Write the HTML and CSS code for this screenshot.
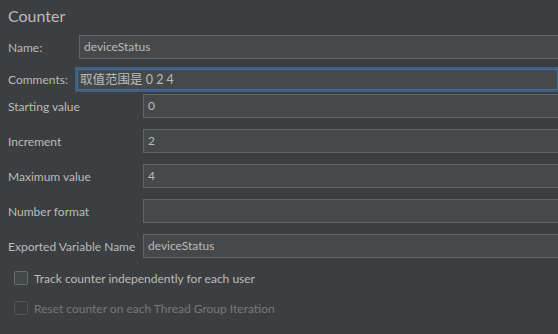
FILE: index.html
```html
<!DOCTYPE html>
<html lang="en">
<head>
    <meta charset="UTF-8">
    <title>Counter</title>
    <link rel="stylesheet" href="styles.css">
</head>
<body>
    <div class="panel">
        <h1 class="title">Counter</h1>

        <div class="top-row">
            <label class="top-label">Name:</label>
            <div class="field">deviceStatus</div>
        </div>
        <div class="top-row comments-row">
            <label class="top-label">Comments:</label>
            <div class="field focused">取值范围是 0 2 4</div>
        </div>

        <div class="grid">
            <label>Starting value</label>
            <div class="field">0</div>
            <label>Increment</label>
            <div class="field">2</div>
            <label>Maximum value</label>
            <div class="field">4</div>
            <label>Number format</label>
            <div class="field"></div>
            <label>Exported Variable Name</label>
            <div class="field">deviceStatus</div>
        </div>

        <div class="check">
            <span class="box"></span>
            <span>Track counter independently for each user</span>
        </div>
        <div class="check disabled">
            <span class="box"></span>
            <span>Reset counter on each Thread Group Iteration</span>
        </div>
    </div>
</body>
</html>
```

FILE: styles.css
```css
* {
    margin: 0;
    padding: 0;
    box-sizing: border-box;
}

body {
    background: #3c3f41;
    color: #bbbbbb;
    font-family: "Lato", "Noto Sans CJK SC", sans-serif;
    font-size: 12px;
    overflow: hidden;
    width: 558px;
    height: 334px;
}

.panel {
    width: 558px;
    padding: 6px 0 0 8px;
}

.title {
    font-size: 16px;
    font-weight: 400;
    line-height: 20px;
    margin-bottom: 9px;
}

.top-row {
    display: flex;
    align-items: center;
    height: 24px;
}

.top-label {
    width: 71px;
}

.comments-row {
    margin-top: 8px;
    height: 25px;
}

.comments-row .top-label {
    width: 67px;
}

.field {
    flex: 1;
    height: 24px;
    line-height: 22px;
    background: #45494a;
    border: 1px solid #646464;
    border-right: none;
    padding: 0 4px;
    white-space: nowrap;
}

.field.focused {
    height: 25px;
    border: 2px solid #3d6185;
    border-right: none;
    box-shadow: inset 0 0 0 1px #466d94;
    padding: 0 3px;
    line-height: 21px;
    font-size: 12.5px;
}

.grid {
    display: grid;
    grid-template-columns: 135px 1fr;
    row-gap: 11px;
    align-items: center;
    margin-top: 2px;
}

.check {
    display: flex;
    align-items: center;
    gap: 6px;
    margin: 13px 0 0 6px;
    height: 14px;
}

.check + .check {
    margin-top: 16px;
}

.box {
    width: 14px;
    height: 14px;
    border: 1px solid #6b6b6b;
    border-radius: 2px;
    background: #43494a;
}

.check.disabled {
    color: #777777;
}

.check.disabled .box {
    border-color: #545556;
    background: #3c3f41;
}
```
